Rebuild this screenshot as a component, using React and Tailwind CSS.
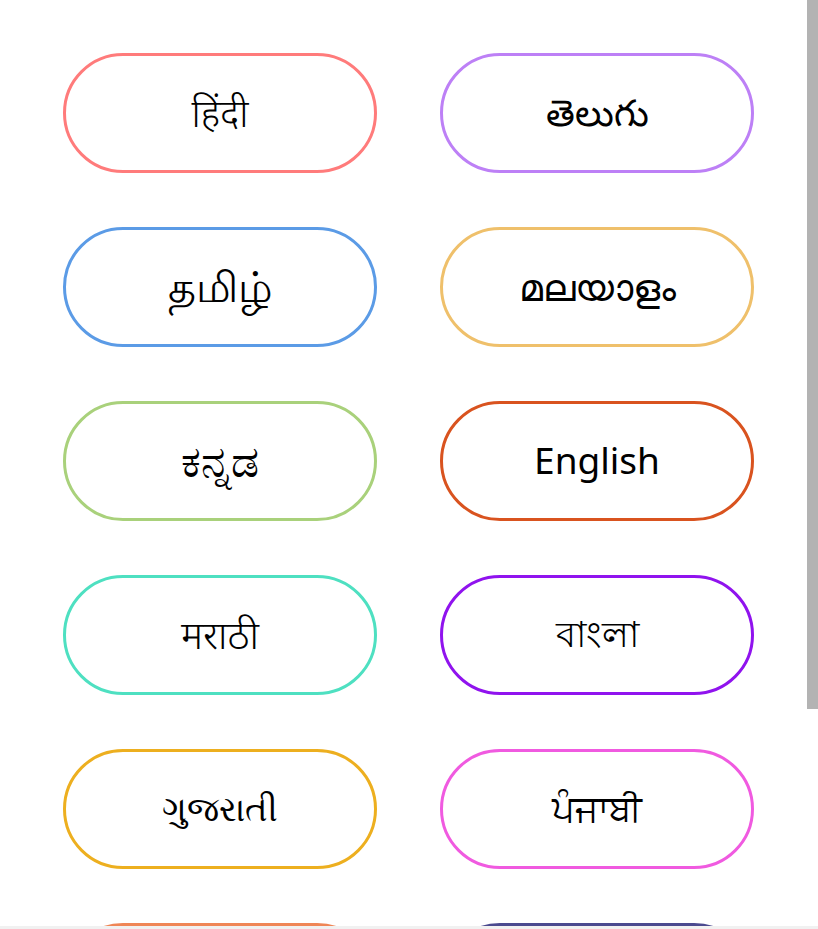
const languages = [
  { label: 'हिंदी', border: 'border-[#ff7b7b]', size: 'text-[38px] font-light' },
  { label: 'తెలుగు', border: 'border-[#bd80f6]', size: 'text-[37px] font-light' },
  { label: 'தமிழ்', border: 'border-[#5b9be6]', size: 'text-[43px] font-normal' },
  { label: 'മലയാളം', border: 'border-[#efc06b]', size: 'text-[38px] font-light' },
  { label: 'ಕನ್ನಡ', border: 'border-[#a9d17b]', size: 'text-[44px] font-normal' },
  { label: 'English', border: 'border-[#d9531f]', size: 'text-[37px] font-normal' },
  { label: 'मराठी', border: 'border-[#4ee0c1]', size: 'text-[39px] font-light' },
  { label: 'বাংলা', border: 'border-[#9013ee]', size: 'text-[36px] font-normal' },
  { label: 'ગુજરાતી', border: 'border-[#edaf1f]', size: 'text-[34px] font-normal' },
  { label: 'ਪੰਜਾਬੀ', border: 'border-[#f05ae0]', size: 'text-[36px] font-normal' },
  { label: 'ଓଡ଼ିଆ', border: 'border-[#ef8656]', size: 'text-[36px] font-normal' },
  { label: 'অসমীয়া', border: 'border-[#4b4a8f]', size: 'text-[36px] font-normal' },
];

export default function App() {
  return (
    <div className="flex h-screen w-full flex-col bg-white font-['Noto_Sans',sans-serif] text-black">
      <div className="flex min-h-0 flex-1">
        <div className="min-w-0 flex-1 overflow-hidden">
          <div className="grid grid-cols-[314px_314px] gap-x-[63px] gap-y-[54px] pl-[63px] pt-[53px]">
            {languages.map((lang) => (
              <button
                key={lang.label}
                className={`flex h-[120px] items-center justify-center rounded-full border-[3px] bg-white pb-[3px] leading-none ${lang.size} ${lang.border}`}
              >
                {lang.label}
              </button>
            ))}
          </div>
        </div>
        <div className="w-[11px] shrink-0">
          <div className="h-[709px] bg-[#b3b3b3]" />
        </div>
      </div>
      <div className="h-[3px] shrink-0 bg-[#f1f1f1]" />
    </div>
  );
}
